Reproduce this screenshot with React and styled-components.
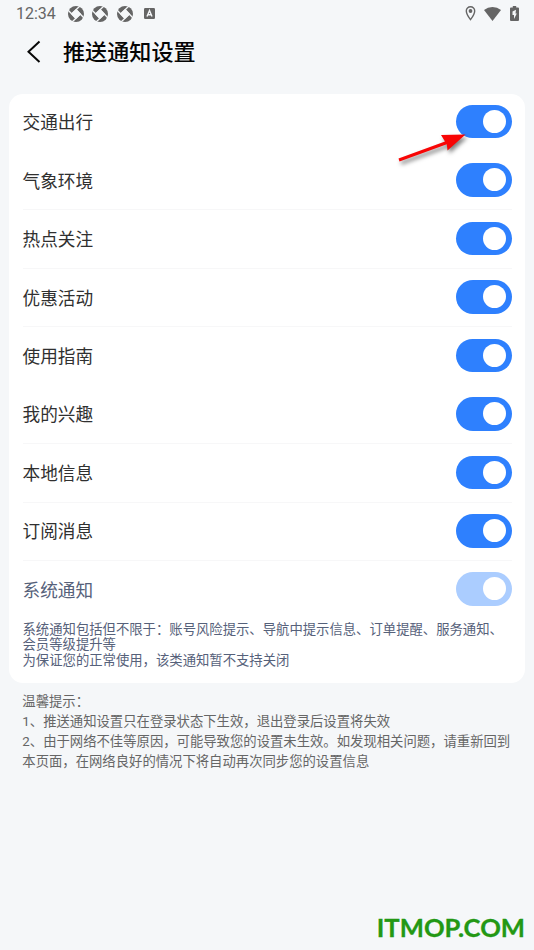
import React from 'react';
import styled, { createGlobalStyle } from 'styled-components';

const GlobalStyle = createGlobalStyle`
  * {
    box-sizing: border-box;
  }

  body {
    background: #f5f7f9;
    font-family: Roboto, "Noto Sans CJK SC", sans-serif;
    margin: 0;
  }
`;

const settings = [
  { label: '交通出行' },
  { label: '气象环境', divider: true },
  { label: '热点关注', divider: true },
  { label: '优惠活动', divider: true },
  { label: '使用指南' },
  { label: '我的兴趣', divider: true },
  { label: '本地信息', divider: true },
  { label: '订阅消息', divider: true },
  { label: '系统通知', disabled: true },
];

const Page = styled.div`
  display: flex;
  flex-direction: column;
  height: 950px;
  overflow: hidden;
  position: relative;
  width: 534px;
`;

const StatusBar = styled.div`
  align-items: center;
  color: #656565;
  display: flex;
  height: 27px;
  justify-content: space-between;
  padding: 0 15.5px 0 16px;

  svg {
    display: block;
  }
`;

const StatusGroup = styled.div`
  align-items: center;
  display: flex;
  gap: ${({ $gap }) => $gap}px;
`;

const Clock = styled.span`
  font-size: 16px;
  line-height: 28px;
  margin-right: 3px;
  padding-top: 1px;
  width: 40px;
`;

const Header = styled.header`
  align-items: center;
  display: flex;
  height: 49px;
  padding: 1px 0 0 26px;
`;

const Title = styled.h1`
  color: #050505;
  font-size: 22.1px;
  font-weight: 500;
  line-height: 32px;
  margin: 0 0 0 21px;
`;

const Card = styled.section`
  background: #fff;
  border-radius: 14px;
  height: 589.5px;
  margin: 17.5px 9px 0;
  padding: 0 13px 0 13.5px;
`;

const Row = styled.div`
  align-items: center;
  border-bottom: 1px solid ${({ $divider }) => ($divider ? '#f7f7f8' : 'transparent')};
  color: ${({ $disabled }) => ($disabled ? '#56617a' : '#303030')};
  display: flex;
  font-size: 17.65px;
  height: 58.45px;
  justify-content: space-between;
  line-height: 26px;
`;

const Label = styled.span`
  padding-top: 2px;
`;

const Switch = styled.button`
  background: ${({ disabled }) => (disabled ? '#abcdff' : '#2e80fe')};
  border: 0;
  border-radius: 17px;
  display: flex;
  height: 33.5px;
  justify-content: flex-end;
  margin-top: -1px;
  padding: 5px 6px;
  width: 56px;
`;

const Knob = styled.span`
  background: #fff;
  border-radius: 50%;
  height: 23px;
  width: 23px;
`;

const Description = styled.p`
  color: #56617a;
  font-size: 13.35px;
  line-height: 15.6px;
  margin: 2.4px 0 0;
  white-space: nowrap;
`;

const Tips = styled.div`
  color: #666;
  font-size: 13.35px;
  line-height: 20px;
  padding: 9px 0 0 22.3px;
  white-space: nowrap;
`;

const Pointer = styled.svg`
  filter: drop-shadow(2px 3px 2px rgba(0, 0, 0, 0.5));
  left: 390px;
  overflow: visible;
  position: absolute;
  top: 125px;
`;

const Watermark = styled.div`
  bottom: 5px;
  color: #239814;
  font-family: Lato, sans-serif;
  font-size: 25.6px;
  font-weight: 700;
  line-height: 36px;
  position: absolute;
  right: 9px;
  -webkit-text-stroke: 0.3px #239814;
`;

function ApertureIcon() {
  return (
    <svg width="16" height="16" viewBox="0 0 16 16" aria-hidden="true">
      <circle cx="8" cy="8" r="8" fill="currentColor" />
      <path d="M8 3 13 8 8 13 3 8Z" fill="#f5f7f9" />
      <path
        d="M4 7.500 12.500-.500M8.500 4 16.500 12.500M12 8.500 3.500 16.500M7.500 12-.500 3.500"
        stroke="#f5f7f9"
        strokeWidth="1.3"
      />
    </svg>
  );
}

function KeyboardIcon() {
  return (
    <svg width="11" height="11" viewBox="0 0 11 11" aria-hidden="true">
      <rect width="11" height="11" rx="1.2" fill="currentColor" />
      <path d="M3 8.500 5.500 2.500 8 8.500M3.900 6.700h3.200" fill="none" stroke="#f5f7f9" strokeWidth="1.4" />
    </svg>
  );
}

function StatusIcons() {
  return (
    <StatusGroup $gap={8.5}>
      <svg width="11" height="15" viewBox="0 0 10 15" aria-hidden="true">
        <path d="M5 .8C2.6.8.8 2.6.8 4.9.8 8 5 13.6 5 13.6S9.2 8 9.2 4.9C9.2 2.6 7.4.8 5 .8Z" fill="none" stroke="currentColor" strokeWidth="1.4" />
        <circle cx="5" cy="5" r="1.9" fill="currentColor" />
      </svg>
      <svg width="17" height="14" viewBox="0 0 17 14" aria-hidden="true">
        <path d="M0 3Q3.7 0 8.5 0T17 3L8.5 14Z" fill="currentColor" />
      </svg>
      <svg width="9" height="15" viewBox="0 0 9 15" aria-hidden="true">
        <path d="M1 1.5h1.8V0h3.4v1.5H8a1 1 0 0 1 1 1V14a1 1 0 0 1-1 1H1a1 1 0 0 1-1-1V2.500a1 1 0 0 1 1-1Z" fill="currentColor" />
        <path d="M6 3.800 2.500 5.500V9H4v4L6.800 7.500H5.500Z" fill="#f5f7f9" />
      </svg>
    </StatusGroup>
  );
}

function SettingRow({ label, divider, disabled }) {
  return (
    <Row $divider={divider} $disabled={disabled}>
      <Label>{label}</Label>
      <Switch type="button" role="switch" aria-checked="true" aria-label={label} disabled={disabled}>
        <Knob />
      </Switch>
    </Row>
  );
}

export default function App() {
  return (
    <Page>
      <GlobalStyle />
      <StatusBar>
        <StatusGroup $gap={8.5}>
          <Clock>12:34</Clock>
          <ApertureIcon />
          <ApertureIcon />
          <StatusGroup $gap={11}>
            <ApertureIcon />
            <KeyboardIcon />
          </StatusGroup>
        </StatusGroup>
        <StatusIcons />
      </StatusBar>
      <Header>
        <svg width="16" height="24" viewBox="0 0 16 24" aria-hidden="true">
          <path d="M13.500 1.500 2.500 11.800 13.500 22" fill="none" stroke="#080808" strokeWidth="2" />
        </svg>
        <Title>推送通知设置</Title>
      </Header>
      <Card>
        {settings.map((setting) => (
          <SettingRow key={setting.label} {...setting} />
        ))}
        <Description>
          系统通知包括但不限于：账号风险提示、导航中提示信息、订单提醒、服务通知、
          <br />
          会员等级提升等
          <br />
          为保证您的正常使用，该类通知暂不支持关闭
        </Description>
      </Card>
      <Tips>
        <div>温馨提示：</div>
        <div>1、推送通知设置只在登录状态下生效，退出登录后设置将失效</div>
        <div>2、由于网络不佳等原因，可能导致您的设置未生效。如发现相关问题，请重新回到</div>
        <div>本页面，在网络良好的情况下将自动再次同步您的设置信息</div>
      </Tips>
      <Pointer width="76" height="38" viewBox="0 0 76 38" aria-hidden="true">
        <path d="M8.500 33.500 55 16.500 51 10 75.500 9.500 57.500 25.500 56.800 19.300 9.500 36.500Z" fill="#f80505" />
      </Pointer>
      <Watermark>ITMOP.COM</Watermark>
    </Page>
  );
}
